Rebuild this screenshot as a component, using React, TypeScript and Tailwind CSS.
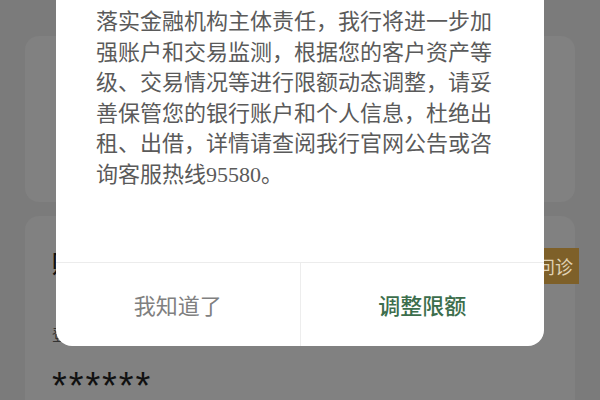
import React from 'react'

// Limit notice dialog over a dimmed account page

const lines = [
  '落实金融机构主体责任，我行将进一步加',
  '强账户和交易监测，根据您的客户资产等',
  '级、交易情况等进行限额动态调整，请妥',
  '善保管您的银行账户和个人信息，杜绝出',
  '租、出借，详情请查阅我行官网公告或咨',
]

const cjk = { fontFamily: '"Noto Sans CJK SC", "Noto Sans", sans-serif' }

function Backdrop() {
  return (
    <div className="h-[400px] w-full overflow-hidden bg-[#7b7b7b] px-[25px] pt-[36px]">
      <div className="h-[166px] rounded-[14px] bg-[#818181]" />
      <div className="mt-[14px] h-[300px] rounded-[14px] bg-[#818181] pl-[27px]">
        <div className="flex items-start justify-between pt-[30px]">
          <div className="text-[24px] font-bold leading-[34px] text-[#111]">账户限额</div>
          <div className="mr-[-4px] mt-[2px] bg-[#7e6029] px-[6px] text-[18px] leading-[36px] text-[#e0d2b4]">
            问诊
          </div>
        </div>
        <div className="mt-[40px] text-[16px] leading-[20px] text-[#333]">登录密码</div>
        <div
          className="mt-[30px] text-[38px] leading-[24px] tracking-[1.9px] text-[#111]"
          style={{ fontFamily: '"Liberation Sans", sans-serif' }}
        >
          ******
        </div>
      </div>
    </div>
  )
}

export default function App() {
  return (
    <div className="relative h-[400px] w-[600px] overflow-hidden" style={cjk}>
      <Backdrop />

      {/* Dialog */}
      <div className="absolute left-[56px] top-[-40px] w-[488px] overflow-hidden rounded-[16px] bg-white">
        <div className="px-[40px] pb-[71px] pt-[44px] text-[22px] leading-[30.6px] text-[#5a5a5a]">
          {lines.map((l) => (
            <div key={l} className="whitespace-nowrap">
              {l}
            </div>
          ))}
          <div className="whitespace-nowrap">
            询客服热线<span style={{ fontFamily: '"Liberation Serif", serif' }}>95580</span>。
          </div>
        </div>
        <div className="flex h-[84px] border-t border-[#ececec]">
          <button className="flex flex-1 items-center justify-center text-[22px] text-[#808080]">
            我知道了
          </button>
          <div className="w-px bg-[#ededed]" />
          <button className="flex flex-1 items-center justify-center text-[22px] font-medium text-[#3c6e4c]">
            调整限额
          </button>
        </div>
      </div>
    </div>
  )
}
